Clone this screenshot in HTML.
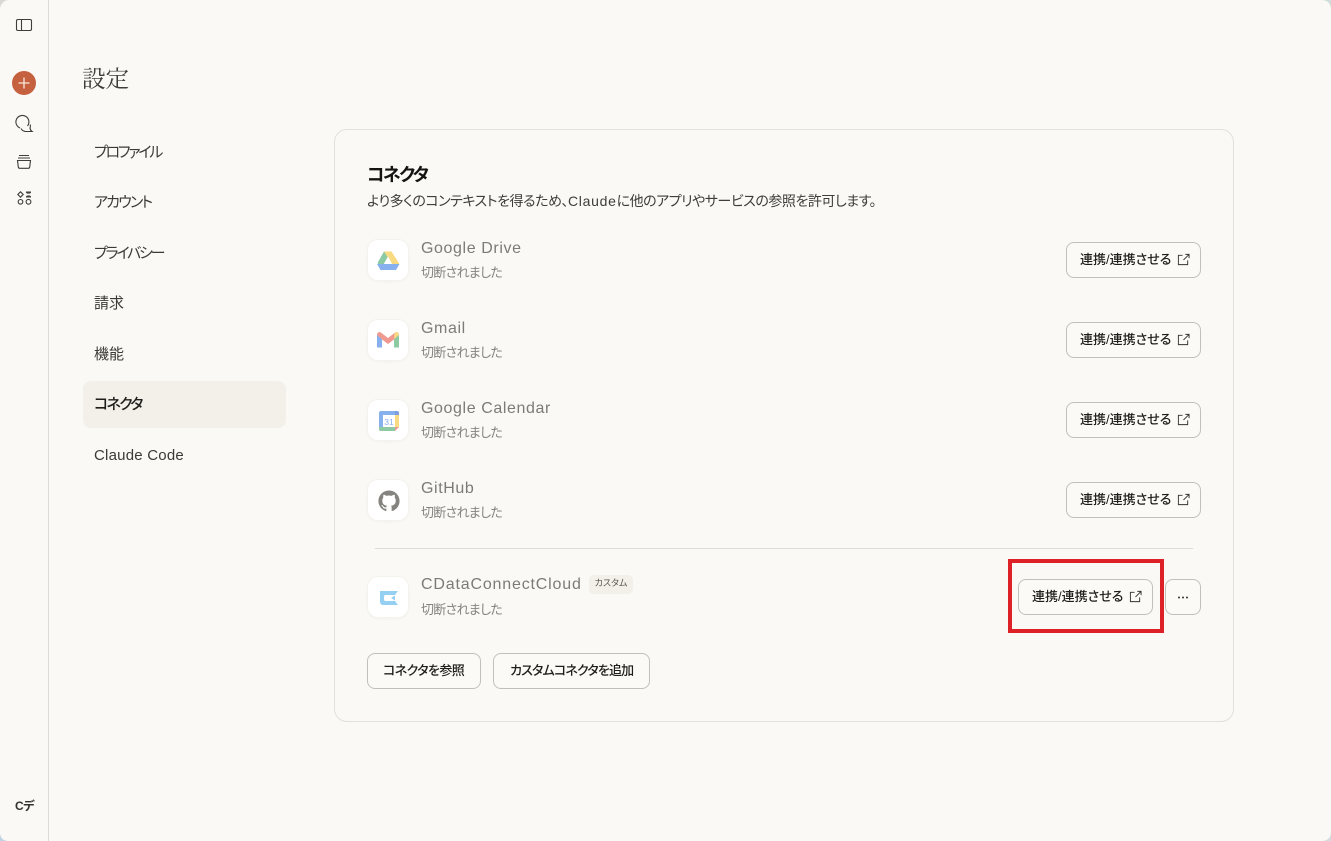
<!DOCTYPE html>
<html lang="ja"><head><meta charset="utf-8"><title>設定</title>
<style>
*{box-sizing:border-box;margin:0;padding:0}
html,body{width:1331px;height:841px;overflow:hidden;background:#faf9f5}
body{position:relative;font-family:"Liberation Sans","Noto Sans CJK JP",sans-serif;color:#1f1e1b;font-feature-settings:"palt"}
.a{position:absolute;white-space:nowrap}
.nav{left:94px;font-size:15px;line-height:22px;color:#3b3a36}
.k{letter-spacing:-2.2px}
.tile{position:absolute;left:367px;width:42px;height:42px;border-radius:11px;background:#fff;border:1px solid #f3f2ed;box-shadow:0 1px 2px rgba(0,0,0,.03)}
.tile svg{position:absolute;left:8px;top:8px;opacity:.9}
.name{left:421px;font-size:16px;line-height:20px;color:#7c7b77;letter-spacing:.6px}
.sub{left:421px;font-size:13px;line-height:18px;color:#85847f;letter-spacing:-.7px}
.btn{position:absolute;height:36px;border:1px solid #c2c0b9;border-radius:8px;background:#fbfaf7;font-size:13px;font-weight:500;line-height:34px;color:#1f1e1b;white-space:nowrap}
.con{width:135px;padding-left:13px}
.con svg{position:absolute;left:110px;top:10px}
</style></head><body>

<!-- sidebar -->
<div class="a" style="left:48px;top:0;width:1px;height:841px;background:#dddbd4"></div>
<svg class="a" style="left:0;top:0" width="1331" height="841" viewBox="0 0 1331 841" fill="none">
<path d="M0 0H8Q2 1 0 8Z" fill="#d9d9d6"/>
<path d="M1331 0H1323Q1330 1 1331 8Z" fill="#cfdcd9"/>
<path d="M0 841H7Q1 840 0 834Z" fill="#bcd4e4"/>
<path d="M1331 841H1323Q1330 840 1331 833Z" fill="#d5dce0"/>
<g stroke="#3d3d3a" stroke-width="1.100">
<rect x="16.500" y="19.500" width="15" height="11" rx="1.500"/>
<path d="M21.500 19.500v11"/>
<path d="M20 128A6.500 6.500 0 1 1 27.500 126"/>
<path d="M21 128.500c1 1.800 2.800 3 5 3h6c-1.200-.8-1.800-2-2-3.500.5-1.200.5-2.500.2-3.500"/>
<path d="M19 155.500h10M18 158h12"/>
<path d="M17.500 160.500h13l-.8 6.500a1.500 1.500 0 0 1-1.500 1.300h-8.400a1.500 1.500 0 0 1-1.500-1.300z"/>
<path d="M20.500 191.800l2.700 2.700-2.700 2.700-2.700-2.700z"/>
<path d="M26 192h5M26.500 192c0 1.500 4 1.500 4 0M26 197h5M26.500 197c0-1.500 4-1.500 4 0"/>
<circle cx="20.500" cy="201.800" r="2.300"/><circle cx="28.500" cy="201.800" r="2.400"/>
</g>
<circle cx="24" cy="83" r="12" fill="#c6613f"/>
<path d="M24 77.500v11M18.500 83h11" stroke="#f9e6dd" stroke-width="1.300"/>
</svg>
<div class="a" style="left:15px;top:798px;font-size:12px;line-height:16px;font-weight:700;color:#33322f;letter-spacing:-.5px">Cデ</div>

<!-- settings nav -->
<div class="a" style="left:82px;top:63px;font-family:'Liberation Serif','Noto Serif CJK SC',serif;font-size:23.500px;line-height:34px;color:#3d3d3a">設定</div>
<div class="a" style="left:83px;top:381px;width:203px;height:47px;background:#f2f0e9;border-radius:8px"></div>
<div class="a nav k" style="top:142px">プロファイル</div>
<div class="a nav k" style="top:192px;letter-spacing:-1.800px">アカウント</div>
<div class="a nav k" style="top:243px">プライバシー</div>
<div class="a nav" style="top:293px">請求</div>
<div class="a nav" style="top:344px">機能</div>
<div class="a nav" style="top:394px;font-weight:500;color:#1f1e1b;letter-spacing:-1.750px">コネクタ</div>
<div class="a nav" style="top:445px;letter-spacing:.22px">Claude Code</div>

<!-- card -->
<div class="a" style="left:334px;top:129px;width:900px;height:593px;border:1px solid #e2e0d9;border-radius:13px;background:#faf9f5"></div>
<div class="a" style="left:367px;top:163px;font-size:18px;line-height:25px;font-weight:700;color:#141413;letter-spacing:-1.750px">コネクタ</div>
<div class="a" style="left:367px;top:191px;font-size:14px;line-height:20px;color:#3d3d3a;letter-spacing:-.47px">より多くのコンテキストを得るため、<span style="letter-spacing:.7px">Claude</span>に他のアプリやサービスの参照を許可します。</div>

<!-- Google Drive -->
<div class="tile" style="top:239px"><svg style="left:7px" width="26" height="26" viewBox="0 0 26 26">
<path d="M9 3.500h7.500L7 19.500 2.500 15z" fill="#7fc59a"/>
<path d="M9 3.500h7.500l8 12.500h-7.500z" fill="#f7d774"/>
<path d="M2 16h22.500l-3.500 6H5.500z" fill="#7ba8ee"/>
<path d="M13 8.500L9 15.500h8z" fill="#fff"/>
</svg></div>
<div class="a name" style="top:239px">Google Drive</div>
<div class="a sub" style="top:264px">切断されました</div>
<div class="btn con" style="left:1066px;top:242px">連携/連携させる<svg width="13" height="13" viewBox="0 0 14 14" fill="none" stroke="#333" stroke-width="1"><path d="M6 2.500H1.500v10h10V8M7 7.500l6-6M9 1.500h4v4"/></svg></div>

<!-- Gmail -->
<div class="tile" style="top:319px"><svg style="left:7px;top:7px" width="26" height="26" viewBox="0 0 26 26">
<path d="M2 8v12.500h5V12z" fill="#7ba8ee"/>
<path d="M19 12v8.500h5V8z" fill="#7fc59a"/>
<path d="M2 8c0-3 3-3.500 4.500-2L13 11l6.500-5c1.500-1.500 4.500-1 4.500 2l-5 4.500-6 4.500-6-4.500z" fill="#ee8f85"/>
<path d="M19.500 6c1.500-1.500 4.500-1 4.500 2l-5 4z" fill="#f7d774"/>
</svg></div>
<div class="a name" style="top:319px">Gmail</div>
<div class="a sub" style="top:344px">切断されました</div>
<div class="btn con" style="left:1066px;top:322px">連携/連携させる<svg width="13" height="13" viewBox="0 0 14 14" fill="none" stroke="#333" stroke-width="1"><path d="M6 2.500H1.500v10h10V8M7 7.500l6-6M9 1.500h4v4"/></svg></div>

<!-- Calendar -->
<div class="tile" style="top:399px"><svg width="26" height="26" viewBox="0 0 26 26">
<rect x="3" y="3" width="20" height="20" rx="2" fill="#fff"/>
<path d="M5 3h14v4H7v12H3V5a2 2 0 0 1 2-2z" fill="#7ba8ee"/>
<path d="M19 3h2a2 2 0 0 1 2 2v2h-4z" fill="#6f95dd"/>
<path d="M19 7h4v12h-4z" fill="#f7d774"/>
<path d="M3 19h16v4H5a2 2 0 0 1-2-2z" fill="#7fc59a"/>
<path d="M19 19h4l-4 4z" fill="#ee8f85"/>
<text x="13" y="17" font-size="8.500" text-anchor="middle" fill="#7ba8ee" font-family="Liberation Sans">31</text>
</svg></div>
<div class="a name" style="top:399px">Google Calendar</div>
<div class="a sub" style="top:424px">切断されました</div>
<div class="btn con" style="left:1066px;top:402px">連携/連携させる<svg width="13" height="13" viewBox="0 0 14 14" fill="none" stroke="#333" stroke-width="1"><path d="M6 2.500H1.500v10h10V8M7 7.500l6-6M9 1.500h4v4"/></svg></div>

<!-- GitHub -->
<div class="tile" style="top:479px"><svg width="26" height="26" viewBox="0 0 16 16">
<path transform="translate(1.500 1.500) scale(.8125)" fill="#777672" d="M8 0C3.580 0 0 3.580 0 8c0 3.540 2.290 6.530 5.470 7.590.4.070.55-.17.55-.38 0-.19-.01-.82-.01-1.490-2.010.37-2.530-.49-2.690-.94-.09-.23-.48-.94-.82-1.130-.28-.15-.68-.52-.01-.53.630-.01 1.080.58 1.230.82.720 1.210 1.870.87 2.330.66.070-.52.280-.87.510-1.070-1.780-.2-3.640-.89-3.640-3.950 0-.87.310-1.590.82-2.150-.08-.2-.36-1.020.08-2.120 0 0 .67-.21 2.200.82.640-.18 1.320-.27 2-.27s1.360.09 2 .27c1.530-1.040 2.200-.82 2.200-.82.440 1.100.16 1.920.08 2.120.51.560.82 1.270.82 2.150 0 3.070-1.870 3.750-3.650 3.950.29.250.54.730.54 1.480 0 1.070-.01 1.930-.01 2.200 0 .21.150.46.55.38A8.010 8.010 0 0 0 16 8c0-4.420-3.580-8-8-8z"/>
</svg></div>
<div class="a name" style="top:479px">GitHub</div>
<div class="a sub" style="top:504px">切断されました</div>
<div class="btn con" style="left:1066px;top:482px">連携/連携させる<svg width="13" height="13" viewBox="0 0 14 14" fill="none" stroke="#333" stroke-width="1"><path d="M6 2.500H1.500v10h10V8M7 7.500l6-6M9 1.500h4v4"/></svg></div>

<div class="a" style="left:375px;top:548px;width:818px;height:1px;background:#dedcd5"></div>

<!-- CData -->
<div class="tile" style="top:576px"><svg width="26" height="26" viewBox="0 0 26 26">
<path d="M4 6h18l-3 4h-9.500a1.500 1.500 0 0 0-1.500 1.500v3a1.500 1.500 0 0 0 1.500 1.500H19l3 4H7a3 3 0 0 1-3-3z" fill="#8accf2"/>
<path d="M15 13l4-2.500v5z" fill="#8accf2"/>
</svg></div>
<div class="a name" style="top:575px;letter-spacing:.82px">CDataConnectCloud</div>
<div class="a" style="left:589px;top:575px;width:44px;height:19px;background:#f2f0e9;border-radius:5px;font-size:9px;line-height:17px;text-align:center;color:#55544f">カスタム</div>
<div class="a sub" style="top:601px">切断されました</div>
<div class="btn con" style="left:1018px;top:579px">連携/連携させる<svg width="13" height="13" viewBox="0 0 14 14" fill="none" stroke="#333" stroke-width="1"><path d="M6 2.500H1.500v10h10V8M7 7.500l6-6M9 1.500h4v4"/></svg></div>
<div class="btn" style="left:1165px;top:579px;width:36px"><svg class="a" style="left:11px;top:16px" width="12" height="3" viewBox="0 0 12 3" fill="#333"><circle cx="2" cy="1.500" r="1"/><circle cx="6" cy="1.500" r="1"/><circle cx="10" cy="1.500" r="1"/></svg></div>
<div class="a" style="left:1008px;top:559px;width:156px;height:74px;border:4px solid #de2027"></div>

<div class="btn" style="left:367px;top:653px;width:114px;padding-left:15px;letter-spacing:-.6px">コネクタを参照</div>
<div class="btn" style="left:493px;top:653px;width:157px;padding-left:16px;letter-spacing:-.85px">カスタムコネクタを追加</div>
</body></html>
